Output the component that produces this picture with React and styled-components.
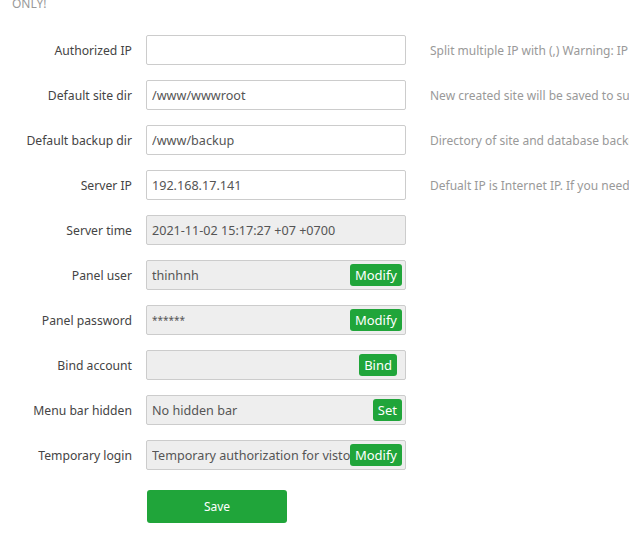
import React from 'react';
import styled, { createGlobalStyle } from 'styled-components';

const GlobalStyle = createGlobalStyle`
  html, body {
    margin: 0;
    padding: 0;
    background: #fff;
    overflow: hidden;
  }
  body {
    font-family: "Noto Sans", "Open Sans", "Liberation Sans", sans-serif;
    font-size: 12px;
    color: #555;
  }
`;

const Page = styled.div`
  width: 629px;
  height: 538px;
  overflow: hidden;
  position: relative;
`;

const Notice = styled.div`
  margin: -6px 0 0 12px;
  height: 41px;
  line-height: 20px;
  color: #999;
  font-size: 12px;
`;

const Form = styled.div`
  display: flex;
  flex-direction: column;
  gap: 15px;
`;

const Row = styled.div`
  display: flex;
  align-items: center;
  height: 30px;
  white-space: nowrap;
`;

const Label = styled.label`
  width: 132px;
  flex: none;
  text-align: right;
  color: #444;
  font-size: 12.2px;
  margin-right: 14px;
`;

const Field = styled.div`
  box-sizing: border-box;
  width: 260px;
  height: 30px;
  flex: none;
  display: flex;
  align-items: center;
  border: 1px solid #ccc;
  border-radius: 2px;
  background: ${(p) => (p.$disabled ? '#eee' : '#fff')};
  padding: 0 3px 0 5px;
  color: #555;
  overflow: hidden;
`;

const Value = styled.span`
  flex: 1;
  min-width: 0;
  overflow: hidden;
  white-space: nowrap;
  font-size: ${(p) => (p.$mask ? '10px' : '12.6px')};
`;

const InlineButton = styled.button`
  flex: none;
  height: 22px;
  padding: 0 5px;
  margin-right: ${(p) => p.$offset || 0}px;
  border: none;
  border-radius: 3px;
  background: #20a53a;
  color: #fff;
  font-family: inherit;
  font-size: 13px;
  line-height: 22px;
  cursor: pointer;
`;

const Help = styled.span`
  margin-left: 24px;
  color: #999;
  font-size: 12px;
  white-space: nowrap;
`;

const Actions = styled.div`
  margin: 20px 0 0 147px;
`;

const SaveButton = styled.button`
  width: 140px;
  height: 33px;
  border: none;
  border-radius: 3px;
  background: #20a53a;
  color: #fff;
  font-family: inherit;
  font-size: 12px;
  cursor: pointer;
`;

const rows = [
  { label: 'Authorized IP', value: '', help: 'Split multiple IP with (,) Warning:  IP whitelist only' },
  { label: 'Default site dir', value: '/www/wwwroot', help: 'New created site will be saved to subdirectory of this directory' },
  { label: 'Default backup dir', value: '/www/backup', help: 'Directory of site and database backups' },
  { label: 'Server IP', value: '192.168.17.141', help: 'Defualt IP is Internet IP. If you need to use intranet' },
  { label: 'Server time', value: '2021-11-02 15:17:27 +07 +0700', disabled: true },
  { label: 'Panel user', value: 'thinhnh', disabled: true, button: 'Modify' },
  { label: 'Panel password', value: '******', disabled: true, button: 'Modify', mask: true },
  { label: 'Bind account', value: '', disabled: true, button: 'Bind', offset: 5 },
  { label: 'Menu bar hidden', value: 'No hidden bar', disabled: true, button: 'Set' },
  { label: 'Temporary login', value: 'Temporary authorization for vistors', disabled: true, button: 'Modify' },
];

export default function App() {
  return (
    <Page>
      <GlobalStyle />
      <Notice>ONLY!</Notice>
      <Form>
        {rows.map((r) => (
          <Row key={r.label}>
            <Label>{r.label}</Label>
            <Field $disabled={r.disabled}>
              <Value $mask={r.mask}>{r.value}</Value>
              {r.button && <InlineButton $offset={r.offset}>{r.button}</InlineButton>}
            </Field>
            {r.help && <Help>{r.help}</Help>}
          </Row>
        ))}
      </Form>
      <Actions>
        <SaveButton>Save</SaveButton>
      </Actions>
    </Page>
  );
}
